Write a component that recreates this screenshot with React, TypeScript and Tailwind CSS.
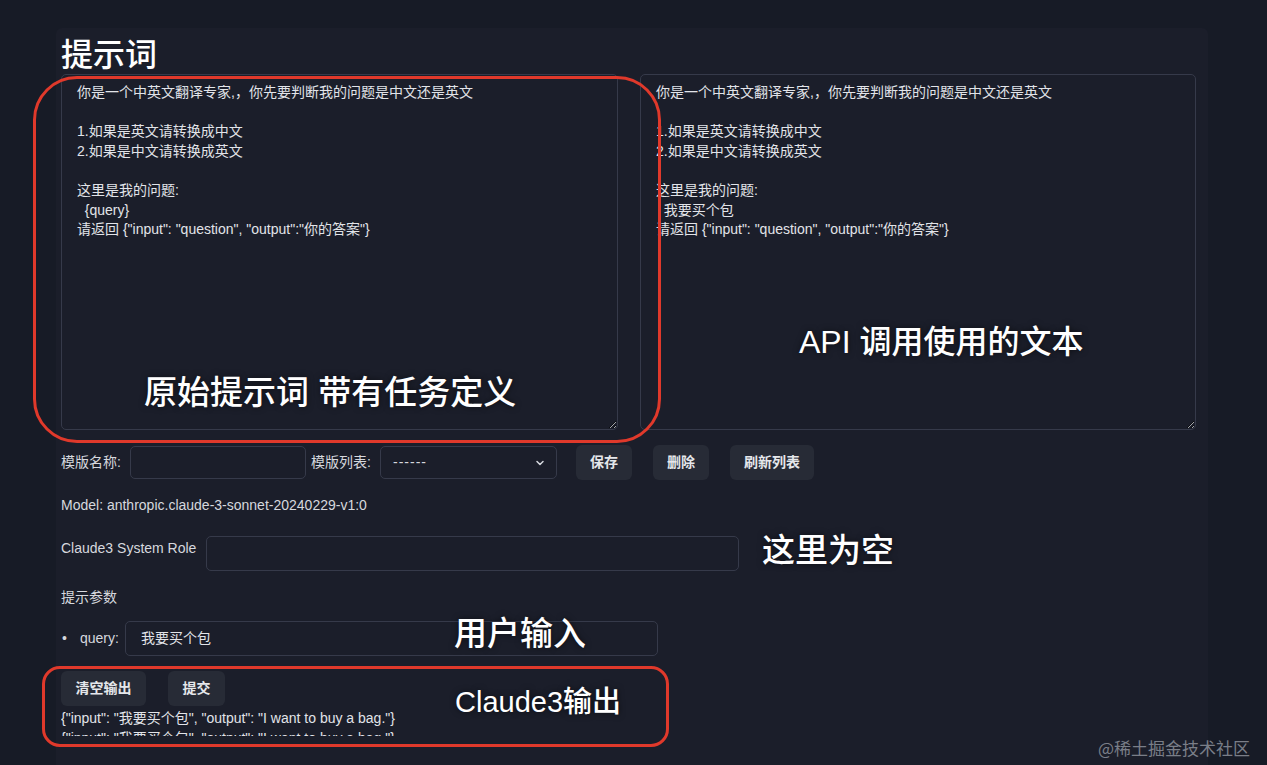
import React from 'react';

const promptText = `你是一个中英文翻译专家,，你先要判断我的问题是中文还是英文

1.如果是英文请转换成中文
2.如果是中文请转换成英文

这里是我的问题:
  {query}
请返回 {"input": "question", "output":"你的答案"}`;

const renderedText = `你是一个中英文翻译专家,，你先要判断我的问题是中文还是英文

1.如果是英文请转换成中文
2.如果是中文请转换成英文

这里是我的问题:
  我要买个包
请返回 {"input": "question", "output":"你的答案"}`;

const output = `{"input": "我要买个包", "output": "I want to buy a bag."}`;

// grey button used across the form
function Btn({ label, w }: { label: string; w: string }) {
    return (
        <button className={`${w} h-[35px] rounded-md bg-[#272b36] text-[14px] font-semibold text-[#e5e7eb]`}>
            {label}
        </button>
    );
}

// big annotation text drawn on top of the screenshot
function Note({ text, className }: { text: string; className: string }) {
    return (
        <div
            className={`absolute whitespace-nowrap text-white font-medium leading-none [text-shadow:0_0_6px_rgba(0,0,0,0.6)] ${className}`}
        >
            {text}
        </div>
    );
}

export default function App() {
    return (
        <div className="relative w-[1267px] h-[765px] overflow-hidden bg-[#171b26] font-['Liberation_Sans','Noto_Sans_CJK_SC',sans-serif] text-[#d6d8de]">
            <div className="pl-[56px] pt-[28px]">
                <div className="w-[1152px] h-[737px] rounded-t-md bg-[#1b1e2a] pl-[5px] pt-[8px]">
                    <h1 className="h-[38px] text-[32px] leading-[38px] font-medium text-white">提示词</h1>

                    <div className="flex gap-[22px]">
                        <textarea
                            readOnly
                            defaultValue={promptText}
                            className="w-[557px] h-[356px] rounded-[5px] border border-[#363a4a] bg-[#1b1e2a] pl-[15px] pr-3 pt-[8px] text-[14px] leading-[19.6px] text-[#e2e4e9] outline-none resize"
                        />
                        <textarea
                            readOnly
                            defaultValue={renderedText}
                            className="w-[556px] h-[356px] rounded-[5px] border border-[#363a4a] bg-[#1b1e2a] pl-[15px] pr-3 pt-[8px] text-[14px] leading-[19.6px] text-[#e2e4e9] outline-none resize"
                        />
                    </div>

                    <div className="mt-[15px] flex items-center text-[14px]">
                        <span className="w-[69px]">模版名称:</span>
                        <div className="w-[176px] h-[33px] rounded-[5px] border border-[#363a4a]" />
                        <span className="ml-[5px] w-[69px]">模版列表:</span>
                        <div className="w-[177px] h-[33px] rounded-[5px] border border-[#363a4a] flex items-center justify-between pl-[12px] pr-[10px]">
                            <span className="tracking-[1px]">------</span>
                            <svg width="12" height="12" viewBox="0 0 24 24" fill="none" stroke="#d6d8de" strokeWidth="3" strokeLinecap="round" strokeLinejoin="round">
                                <path d="M6 9l6 6 6-6" />
                            </svg>
                        </div>
                        <div className="ml-[19px] flex gap-[21px]">
                            <Btn label="保存" w="w-[56px]" />
                            <Btn label="删除" w="w-[56px]" />
                            <Btn label="刷新列表" w="w-[84px]" />
                        </div>
                    </div>

                    <div className="mt-[15px] text-[14px] leading-[20px]">Model: anthropic.claude-3-sonnet-20240229-v1:0</div>

                    <div className="mt-[21px] flex items-start text-[14px]">
                        <span className="w-[145px] mt-[2px] leading-[20px]">Claude3 System Role</span>
                        <div className="w-[533px] h-[35px] rounded-[5px] border border-[#363a4a]" />
                    </div>

                    <div className="mt-[16px] text-[14px] leading-[20px]">提示参数</div>

                    <div className="mt-[14px] flex items-center text-[14px]">
                        <span className="w-[19px] pl-[1px]">•</span>
                        <span className="w-[45px]">query:</span>
                        <div className="w-[533px] h-[35px] rounded-[5px] border border-[#363a4a] flex items-center pl-[15px] text-[#e2e4e9]">
                            我要买个包
                        </div>
                    </div>

                    <div className="mt-[15px] flex gap-[22px]">
                        <Btn label="清空输出" w="w-[85px]" />
                        <Btn label="提交" w="w-[57px]" />
                    </div>

                    <div className="mt-[2px] h-[28px] overflow-hidden text-[14px] leading-[20px] text-[#e2e4e9]">
                        <div>{output}</div>
                        <div>{output}</div>
                    </div>
                </div>
            </div>

            {/* red highlight rings */}
            <div className="absolute left-[33px] top-[76px] w-[628px] h-[367px] rounded-[44px] border-[3px] border-[#e0392b]" />
            <div className="absolute left-[42px] top-[666px] w-[627px] h-[81px] rounded-[18px] border-[3px] border-[#e0392b]" />

            <Note text="原始提示词 带有任务定义" className="left-[144px] top-[376px] text-[33px]" />
            <Note text="API 调用使用的文本" className="left-[799px] top-[326px] text-[32px]" />
            <Note text="这里为空" className="left-[762px] top-[534px] text-[33px]" />
            <Note text="用户输入" className="left-[454px] top-[617px] text-[33px]" />
            <Note text="Claude3输出" className="left-[455px] top-[688px] text-[29px]" />

            <div className="absolute left-[1098px] top-[737px] text-[17px] leading-[22px] text-[#7a7e88] font-['Noto_Sans_CJK_SC',sans-serif]">
                @稀土掘金技术社区
            </div>
        </div>
    );
}
